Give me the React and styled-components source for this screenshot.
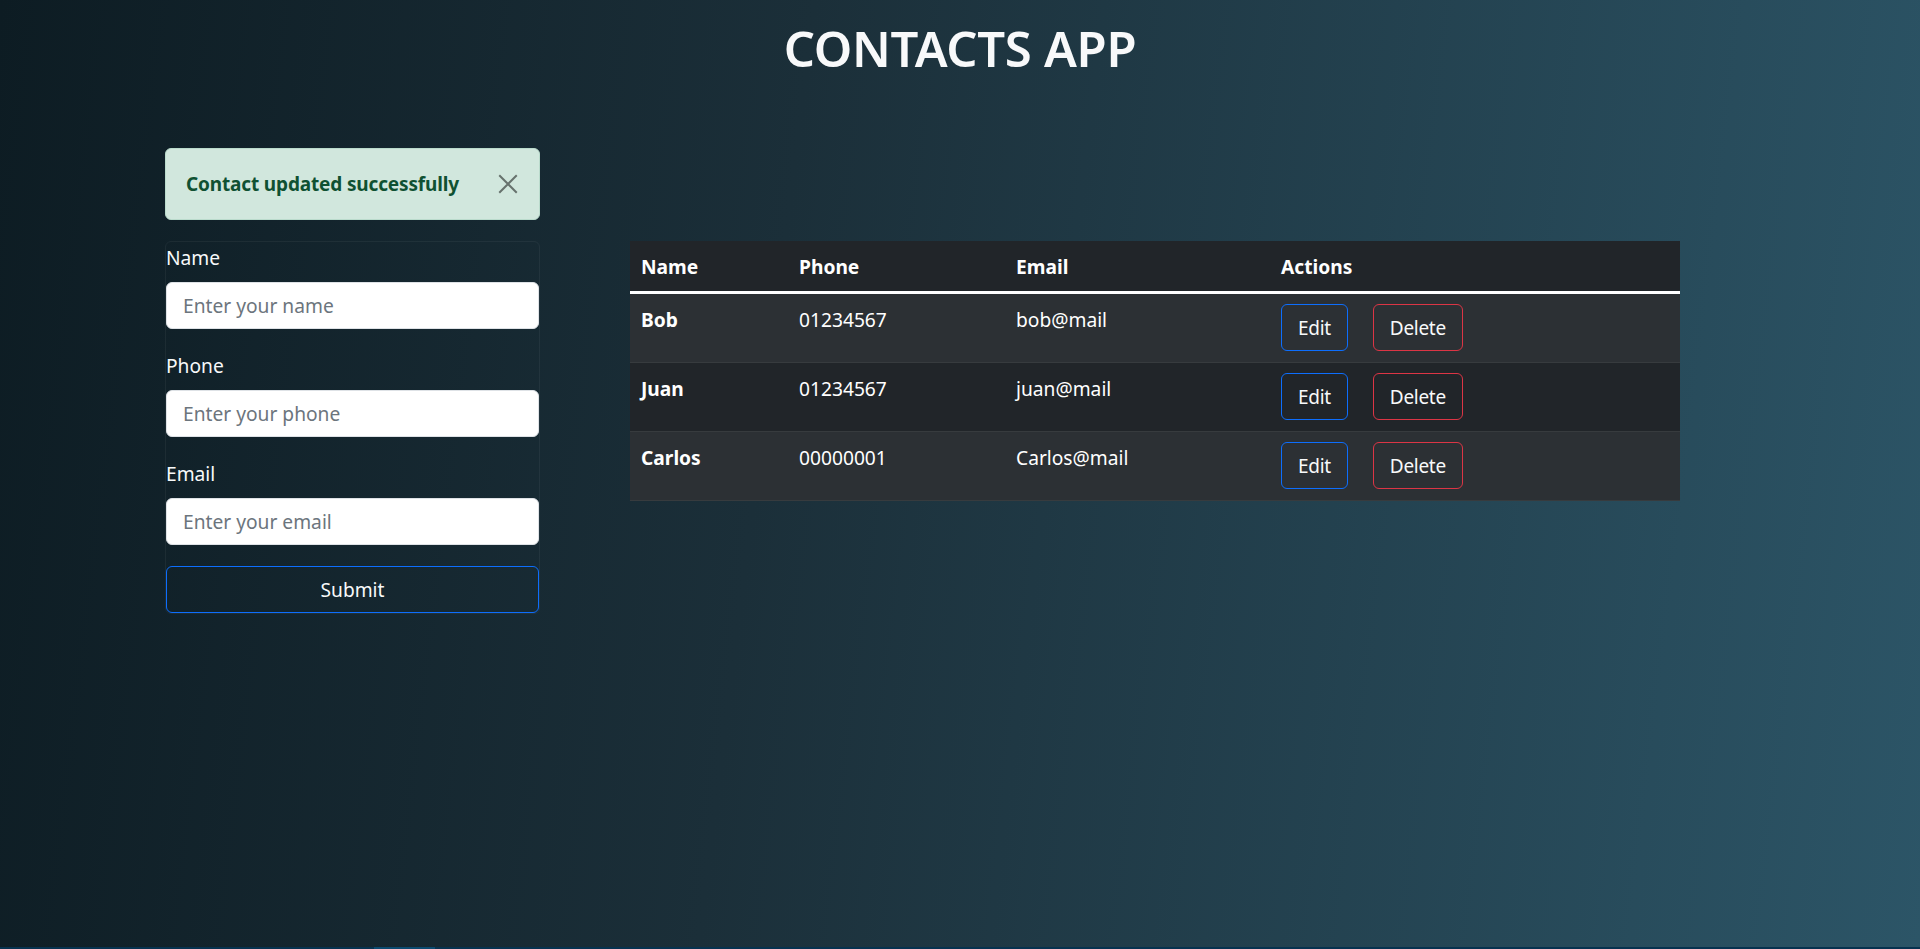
import React from 'react';
import styled, { createGlobalStyle } from 'styled-components';

const GlobalStyle = createGlobalStyle`
  html, body {
    margin: 0;
    padding: 0;
  }
  body {
    font-family: 'Noto Sans', 'Open Sans', sans-serif;
    color: #f8f9fa;
    background: #0e1d24;
  }
  * { box-sizing: border-box; }
`

const Page = styled.div`
  min-height: 100vh;
  display: flex;
  flex-direction: column;
  background: linear-gradient(97deg, #0d1c23 0%, #1b2f39 40%, #2c5567 100%);
`

const Content = styled.div`
  flex: 1;
`

const Title = styled.h1`
  margin: 19px 0 0;
  text-align: center;
  font-size: 49px;
  font-weight: 600;
  line-height: 1.2;
  letter-spacing: -0.3px;
  color: #f8f9fa;
`

const Main = styled.div`
  display: flex;
  align-items: flex-start;
  gap: 90px;
  margin-top: 70px;
  padding-left: 165px;
`

const LeftColumn = styled.div`
  width: 375px;
`

const Alert = styled.div`
  position: relative;
  background: #d1e7dd;
  border: 1px solid #badbcc;
  border-radius: 6px;
  color: #0f5132;
  font-weight: 700;
  font-size: 19px;
  line-height: 1.5;
  letter-spacing: -0.15px;
  padding: 21px 60px 21px 20px;
  white-space: nowrap;
`

const CloseButton = styled.button`
  position: absolute;
  right: 20px;
  top: 50%;
  transform: translateY(-50%);
  width: 22px;
  height: 22px;
  padding: 0;
  border: 0;
  background: transparent;
  opacity: 0.5;
  display: flex;
  align-items: center;
  justify-content: center;
`

const FormCard = styled.form`
  margin-top: 21px;
  border: 1px solid rgba(255, 255, 255, 0.05);
  border-radius: 6px;
`

const Group = styled.div`
  margin-bottom: 21px;
`

const Label = styled.label`
  display: block;
  font-size: 19.2px;
  line-height: 1.5;
  padding-top: 2px;
  margin-bottom: 9px;
  color: #f8f9fa;
`

const Input = styled.input`
  display: block;
  width: 100%;
  height: 47px;
  padding: 0 16px;
  font-family: inherit;
  font-size: 19.2px;
  color: #212529;
  background: #fff;
  border: 1px solid #dee2e6;
  border-radius: 6px;
  outline: none;
  &::placeholder {
    color: #6c757d;
  }
`

const SubmitButton = styled.button`
  display: block;
  width: 100%;
  height: 47px;
  font-family: inherit;
  font-size: 19.2px;
  color: #f8f9fa;
  background: transparent;
  border: 1px solid #0d6efd;
  border-radius: 6px;
`

const TableWrap = styled.div`
  width: 1050px;
  margin-top: 93px;
`

const Table = styled.table`
  width: 100%;
  border-collapse: collapse;
  table-layout: fixed;
  font-size: 19.2px;
  line-height: 1.5;
  color: #fff;
`

const Th = styled.th`
  text-align: left;
  font-weight: 700;
  padding: 12.6px 11px 9px;
  background: #212529;
  border-bottom: 3px solid #fff;
`

const Tr = styled.tr`
  background: ${p => (p.$striped ? '#2c3034' : '#212529')};
  border-bottom: 1px solid #373b3e;
`

const Td = styled.td`
  padding: ${p => (p.$actions ? '10px 11px 11px' : '12px 11px 8px')};
  vertical-align: top;
  font-weight: ${p => (p.$bold ? 700 : 400)};
`

const Actions = styled.div`
  display: flex;
  gap: 25px;
`

const ActionButton = styled.button`
  height: 47px;
  padding: 0 16px;
  font-family: inherit;
  font-size: 19px;
  letter-spacing: -0.3px;
  color: #f8f9fa;
  background: transparent;
  border: 1px solid ${p => (p.$variant === 'danger' ? '#dc3545' : '#0d6efd')};
  border-radius: 6px;
`

const BottomBar = styled.div`
  height: 2px;
  background: #07324f;
`

const BarThumb = styled.div`
  width: 61px;
  height: 2px;
  margin-left: 374px;
  background: #0b4a70;
`

const contacts = [
  { name: 'Bob', phone: '01234567', email: 'bob@mail' },
  { name: 'Juan', phone: '01234567', email: 'juan@mail' },
  { name: 'Carlos', phone: '00000001', email: 'Carlos@mail' },
];

const CloseIcon = () => (
  <svg width="20" height="20" viewBox="0 0 16 16">
    <path d="M1 1L15 15M15 1L1 15" stroke="#000" strokeWidth="1.6" fill="none" />
  </svg>
);

export default function App() {
  return (
    <Page>
      <GlobalStyle />
      <Content>
        <Title>CONTACTS APP</Title>
        <Main>
          <LeftColumn>
            <Alert>
              Contact updated successfully
              <CloseButton type="button" aria-label="Close"><CloseIcon /></CloseButton>
            </Alert>
            <FormCard onSubmit={e => e.preventDefault()}>
              <Group>
                <Label>Name</Label>
                <Input placeholder="Enter your name" />
              </Group>
              <Group>
                <Label>Phone</Label>
                <Input placeholder="Enter your phone" />
              </Group>
              <Group>
                <Label>Email</Label>
                <Input placeholder="Enter your email" />
              </Group>
              <SubmitButton type="submit">Submit</SubmitButton>
            </FormCard>
          </LeftColumn>
          <TableWrap>
            <Table>
              <colgroup>
                <col style={{ width: 158 }} />
                <col style={{ width: 217 }} />
                <col style={{ width: 265 }} />
                <col style={{ width: 410 }} />
              </colgroup>
              <thead>
                <tr>
                  <Th>Name</Th>
                  <Th>Phone</Th>
                  <Th>Email</Th>
                  <Th>Actions</Th>
                </tr>
              </thead>
              <tbody>
                {contacts.map((c, i) => (
                  <Tr key={c.name} $striped={i % 2 === 0}>
                    <Td $bold>{c.name}</Td>
                    <Td>{c.phone}</Td>
                    <Td>{c.email}</Td>
                    <Td $actions>
                      <Actions>
                        <ActionButton>Edit</ActionButton>
                        <ActionButton $variant="danger">Delete</ActionButton>
                      </Actions>
                    </Td>
                  </Tr>
                ))}
              </tbody>
            </Table>
          </TableWrap>
        </Main>
      </Content>
      <BottomBar><BarThumb /></BottomBar>
    </Page>
  );
}
